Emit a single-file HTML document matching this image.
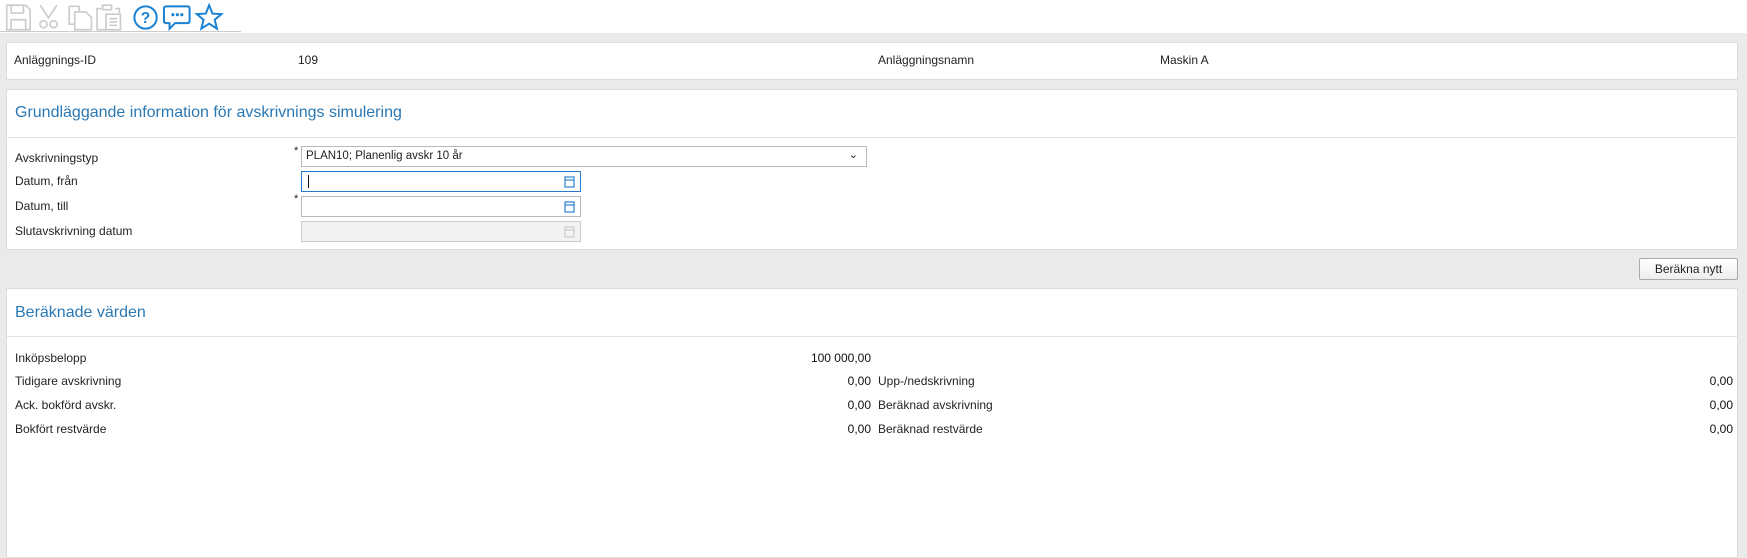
<!DOCTYPE html>
<html><head><meta charset="utf-8"><style>
*{margin:0;padding:0;box-sizing:border-box}
body{width:1747px;height:552px;background:#eaeaea;font-family:"Segoe UI","Liberation Sans",sans-serif;font-size:12px;color:#222;position:relative;overflow:hidden}
.abs{position:absolute;white-space:nowrap}
.tb{position:absolute;left:0;top:0;width:1747px;height:33px;background:#fff}
.tbline{position:absolute;left:0;top:31px;width:241px;height:1px;background:#ccc}
.panel{position:absolute;left:6px;width:1732px;background:#fff;border:1px solid #dcdcdc}
.h{position:absolute;left:8px;font-size:16px;color:#2a78b4}
.div{position:absolute;left:0;right:0;height:1px;background:#e2e2e2}
.inp{position:absolute;height:21px;border:1px solid #b9b9b9;background:#fff}
.lbl{position:absolute;left:8px;color:#222;transform:translateY(-50%)}
.val{position:absolute;transform:translateY(-50%);text-align:right;color:#111}
</style></head><body>
<div class="tb">
<svg class="abs" style="left:4px;top:3px" width="224" height="29" viewBox="0 0 200 26" fill="none">
 <g stroke="#ccc" stroke-width="1.5">
  <path d="M2 2h17l4 4v18H2z M6 2v7h11V2 M6 24v-9h13v9"/>
  <path d="M32 2l8 12 M47 2l-8 12"/><circle cx="35" cy="19" r="3.2"/><circle cx="44" cy="19" r="3.2"/>
  <path d="M58 3h9v4 M58 3v16h5 M63 8h10l5 5v11H63z"/>
  <path d="M87 5h-4v19h8 M99 5h4v4 M88 2h8v4h-8z M91 10h13v14H91z M94 14h7 M94 17h7 M94 20h7"/>
 </g>
 <g stroke="#1a82d4" stroke-width="1.8">
  <circle cx="126.5" cy="13" r="10"/>
  <path d="M145 3h19q2 0 2 2v11q0 2-2 2h-11l-5 5v-5h-3q-2 0-2-2V5q0-2 2-2z"/>
  <path d="M183.5 2l3 7.5 8 .5-6 5 2 8-7-4.5-7 4.5 2-8-6-5 8-.5z"/>
 </g>
 <text x="126.5" y="18" text-anchor="middle" font-size="14" font-family="Liberation Sans" fill="#1a82d4" font-weight="bold">?</text>
 <g fill="#1a82d4"><circle cx="151" cy="10.5" r="1.4"/><circle cx="155" cy="10.5" r="1.4"/><circle cx="159" cy="10.5" r="1.4"/></g>
</svg>
<div class="tbline"></div>
</div>

<div class="panel" style="top:42px;height:38px">
 <div class="abs" style="left:7px;top:10px">Anläggnings-ID</div>
 <div class="abs" style="left:291px;top:10px">109</div>
 <div class="abs" style="left:871px;top:10px">Anläggningsnamn</div>
 <div class="abs" style="left:1153px;top:10px">Maskin A</div>
</div>

<div class="panel" style="top:89px;height:161px">
 <div class="h" style="top:14px">Grundläggande information för avskrivnings simulering</div>
 <div class="div" style="top:47px"></div>
 <div class="lbl" style="top:68px">Avskrivningstyp</div>
 <div class="abs" style="left:287px;top:55px;font-size:11px">*</div>
 <div class="inp" style="left:294px;top:56px;width:566px"><span class="abs" style="left:4px;top:3px;font-size:11.5px">PLAN10; Planenlig avskr 10 år</span><span class="abs" style="right:8px;top:1px;font-size:11px">⌄</span></div>
 <div class="lbl" style="top:91px">Datum, från</div>
 <div class="inp" style="left:294px;top:81px;width:280px;border-color:#2a78c8"><span class="abs" style="left:6px;top:3px;width:1px;height:13px;background:#111"></span></div>
 <div class="lbl" style="top:116px">Datum, till</div>
 <div class="abs" style="left:287px;top:103px;font-size:11px">*</div>
 <div class="inp" style="left:294px;top:106px;width:280px"></div>
 <div class="lbl" style="top:141px">Slutavskrivning datum</div>
 <div class="inp" style="left:294px;top:131px;width:280px;background:#f2f2f2;border-color:#ccc"></div>
 <svg class="abs" style="left:557px;top:85px" width="12" height="75"><g fill="none" stroke-width="1.2"><rect x="1" y="2" width="9" height="10" stroke="#2a82d0"/><path d="M1 5h9" stroke="#2a82d0"/><rect x="1" y="27" width="9" height="10" stroke="#2a82d0"/><path d="M1 30h9" stroke="#2a82d0"/><rect x="1" y="52" width="9" height="10" stroke="#ccc"/><path d="M1 55h9" stroke="#ccc"/></g></svg>
</div>

<div class="abs" style="left:1639px;top:258px;width:99px;height:22px;border:1px solid #aaa;border-radius:2px;background:linear-gradient(#fff,#eee);text-align:center;line-height:20px">Beräkna nytt</div>

<div class="panel" style="top:288px;height:270px">
 <div class="h" style="top:15px">Beräknade värden</div>
 <div class="div" style="top:47px"></div>
 <div class="lbl" style="top:69px">Inköpsbelopp</div>
 <div class="val" style="right:866px;top:69px">100 000,00</div>
 <div class="lbl" style="top:92px">Tidigare avskrivning</div>
 <div class="val" style="right:866px;top:92px">0,00</div>
 <div class="lbl" style="left:871px;top:92px">Upp-/nedskrivning</div>
 <div class="val" style="right:4px;top:92px">0,00</div>
 <div class="lbl" style="top:116px">Ack. bokförd avskr.</div>
 <div class="val" style="right:866px;top:116px">0,00</div>
 <div class="lbl" style="left:871px;top:116px">Beräknad avskrivning</div>
 <div class="val" style="right:4px;top:116px">0,00</div>
 <div class="lbl" style="top:140px">Bokfört restvärde</div>
 <div class="val" style="right:866px;top:140px">0,00</div>
 <div class="lbl" style="left:871px;top:140px">Beräknad restvärde</div>
 <div class="val" style="right:4px;top:140px">0,00</div>
</div>
</body></html>
